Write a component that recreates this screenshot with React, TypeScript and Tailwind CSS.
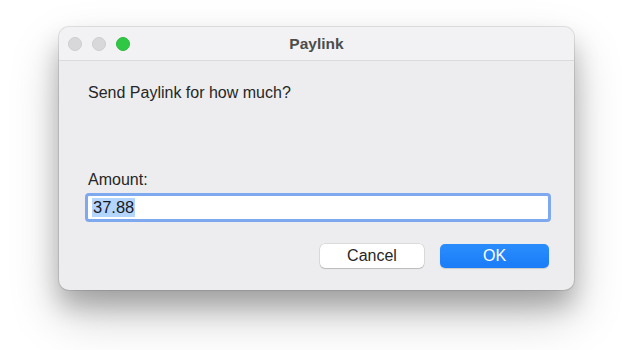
import React from "react";

export default function App() {
  const font = { fontFamily: '"Liberation Sans", Arial, sans-serif' };
  return (
    <div className="w-[622px] h-[350px] bg-white pl-[59px] pt-[27px]" style={font}>
      <div className="w-[515px] h-[263px] rounded-[10px] overflow-hidden flex flex-col bg-[#ededef] shadow-[0_0_0_1px_rgba(0,0,0,0.1),0_16px_24px_rgba(0,0,0,0.22),0_24px_50px_rgba(0,0,0,0.22)]">
        <div className="relative h-[34px] shrink-0 flex items-center justify-center bg-[#f2f2f4] border-b border-[#dadadc]">
          <div className="absolute left-[9px] top-[10px] flex gap-[10px]">
            <span className="w-[14px] h-[14px] rounded-full bg-[#d8d8da] border border-[#cdcdcf]" />
            <span className="w-[14px] h-[14px] rounded-full bg-[#d8d8da] border border-[#cdcdcf]" />
            <span className="w-[14px] h-[14px] rounded-full bg-[#2fc844] border border-[#2ab93f]" />
          </div>
          <span className="text-[15.5px] font-bold text-[#4c4c4c]">Paylink</span>
        </div>
        <div className="flex-1 flex flex-col pl-[26px] pr-[23px] pt-[22px]">
          <div className="ml-[3px] text-[16px] leading-[19px] text-[#262626]">Send Paylink for how much?</div>
          <div className="ml-[3px] mt-[68px] text-[16px] leading-[19px] text-[#262626]">Amount:</div>
          <div className="mt-[4px] h-[29px] w-full rounded-[4px] border-[3px] border-[#7fa9ef] bg-white flex items-center pl-[4px]">
            <span className="bg-[#b4d5fe] text-[16.5px] leading-[19px] text-[#1a1a1a] px-[1px]">37.88</span>
          </div>
          <div className="mt-[22px] flex justify-end gap-[16px] pr-[2px]">
            <button className="w-[104px] h-[24px] rounded-[5px] bg-white text-[16px] text-[#262626] shadow-[0_0_0_0.5px_rgba(0,0,0,0.15),0_1px_1px_rgba(0,0,0,0.15)]">Cancel</button>
            <button className="w-[109px] h-[24px] rounded-[5px] bg-gradient-to-b from-[#2a8dfd] to-[#1a7cf7] text-[16px] text-white shadow-[0_1px_1px_rgba(0,0,0,0.15)]">OK</button>
          </div>
        </div>
      </div>
    </div>
  );
}
